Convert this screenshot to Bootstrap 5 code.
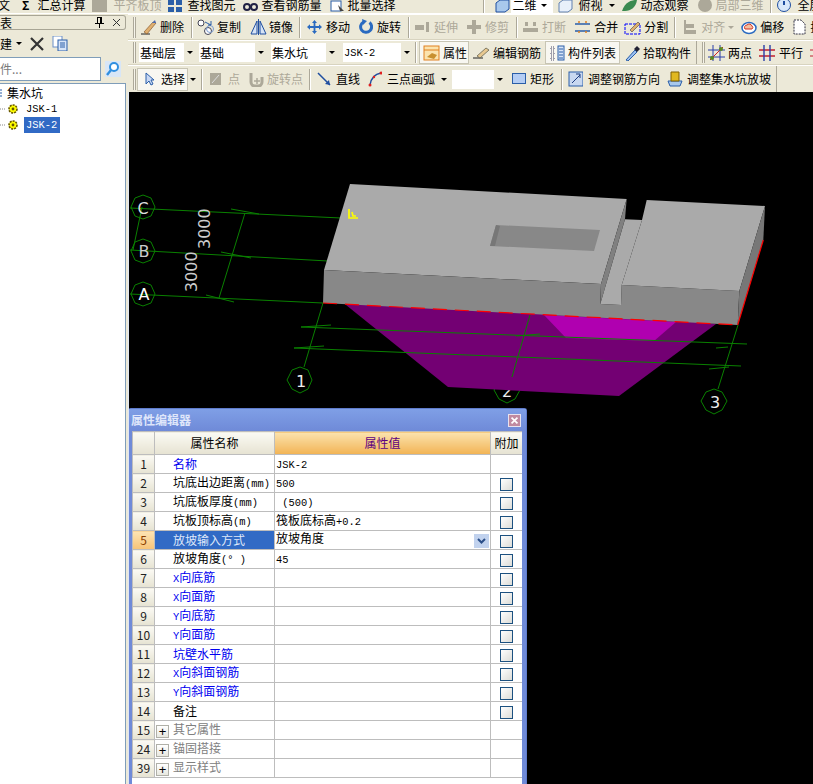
<!DOCTYPE html>
<html lang="zh"><head><meta charset="utf-8"><title>属性编辑器</title>
<link href="https://cdn.jsdelivr.net/npm/bootstrap@5.3.0/dist/css/bootstrap.min.css" rel="stylesheet">
<script src="https://cdn.jsdelivr.net/npm/bootstrap@5.3.0/dist/js/bootstrap.bundle.min.js"></script>
<style>
html,body{margin:0;background:#000;overflow:hidden}
body{font-family:"Noto Sans CJK SC","Liberation Sans",sans-serif;font-size:12px;line-height:14px;color:#000}
.app{width:813px;height:784px;background:#ece9d8;overflow:hidden}
.topstrip{height:14px;overflow:hidden;white-space:nowrap;border-bottom:1px solid #fff;flex:none}
.topin{margin-top:-3px;height:16px}
.topfirst{margin-left:-2px}
.tool{display:flex;align-items:center;gap:3px;white-space:nowrap;flex:none}
.tool svg{display:block;flex:none}
.dis{color:#aca899}
.whitebox{background:#fff;display:flex;align-items:center;width:42px;height:16px;gap:4px;padding-left:2px}
.bar{height:26px;flex:none;display:flex;align-items:center;padding-left:5px;border-bottom:1px solid #d8d4c0;border-top:1px solid #fff;white-space:nowrap;overflow:hidden}
.bar.b3{height:25px}.bar.b4{height:27px;border-bottom:none}
.grip{width:3px;height:21px;border-left:1px solid #aca899;border-right:1px solid #aca899;background:#f6f4ea;flex:none}
.sepv{width:2px;height:21px;border-left:1px solid #aca899;border-right:1px solid #fff;flex:none}
.edge{width:1px;height:100%;background:#aca899;flex:none}
.ml2{margin-left:2px}.ml3{margin-left:3px}.ml5{margin-left:5px}.ml6{margin-left:6px}.ml7{margin-left:7px}.ml8{margin-left:8px}.ml87{margin-left:87px}
.mr1{margin-right:1px}.mr2{margin-right:2px}.mr3{margin-right:3px}.mr4{margin-right:4px}.mr5{margin-right:5px}.mr6{margin-right:6px}.mr7{margin-right:7px}.mr8{margin-right:8px}.mr9{margin-right:9px}.mr10{margin-right:10px}
.g1{gap:1px}.g2{gap:2px}.g4{gap:4px}.g5{gap:5px}.g7{gap:7px}
.combo{height:19px;background:#fff;display:flex;align-items:center;justify-content:space-between;padding-left:1px;flex:none}
.cw56{width:56px}.cw67{width:67px}.cw66{width:66px}.cw69{width:69px}.cw53{width:53px}
.carr{width:11px;height:19px;background:#ece9d8;display:flex;align-items:center;justify-content:center}
.tri{width:0;height:0;border-left:3px solid transparent;border-right:3px solid transparent;border-top:3px solid #000;display:inline-block;flex:none}
.tri.grey{border-top-color:#aca899}
.press{height:23px;background:#f8f7f1;border:1px solid #c8c5b4}
.pw50{width:50px;padding-left:3px}.pw75{width:75px;padding-left:4px}.pw51{width:51px;padding-left:7px}
.lat{font-family:"Liberation Mono",monospace;font-size:10.4px}
.leftp{width:128px;flex:none;display:flex;flex-direction:column}
.lhead{height:15px;margin-top:1px;border:1px solid #a8a595;border-left:none;border-radius:0 3px 3px 0;display:flex;align-items:center;justify-content:space-between;width:126px;flex:none;overflow:hidden}
.ltools{height:27px;display:flex;align-items:center;flex:none}
.lsearch{height:24px;display:flex;align-items:center;flex:none}
.linp{width:101px;height:24px;background:#fff;border:1px solid #7f9db9;border-left:none;color:#7a7a7a;display:flex;align-items:center}
.ltree{flex:1;background:#fff;border:1px solid #7f9db9;border-left:none;border-bottom:none;margin-top:2px;width:126px}
.trow{height:16px;display:flex;align-items:center;white-space:nowrap}
.trow.first{height:17px}
.tsel{background:#316ac5;color:#fff;padding:0 3px 0 2px;height:16px;line-height:16px}
.canvasw{flex:1;position:relative;background:#000;border-left:1px solid #dfe6f4;overflow:hidden}
.scene{display:block;width:685px;height:692px}
.dlg{position:absolute;left:-1px;top:316px;width:399px;height:376px;background:#6f8ad8;border:1px solid #5f7ccc;border-bottom:none;border-radius:3px 3px 0 0;padding:0 4px 0 3px;display:flex;flex-direction:column}
.dtitle{height:22px;flex:none;display:flex;align-items:center;justify-content:space-between;color:#dfe6fa;font-weight:700;background:linear-gradient(#7f9fe6,#6f8ad8);margin:0 -4px 0 -3px;padding:0 5px 0 2px}
.dclose{width:13px;height:13px;border:1px solid #e8e2ee;background:#c08aa0;display:block}
.dbody{background:#fff;flex:1;overflow:hidden}
.ptab{table-layout:fixed;width:390px;margin:0;border-collapse:collapse;--bs-table-bg:transparent;--bs-table-color:#000;--bs-table-border-color:#bdbdbd}
.ptab th,.ptab td{padding:0;height:19px;font-weight:400;font-size:12px;line-height:14px;border:1px solid #bdbdbd;vertical-align:middle;white-space:nowrap;overflow:hidden}
.ptab thead th{height:23px;text-align:center;background:linear-gradient(#fbfaf4,#e6e3d2)}
.ptab thead th.valh{background:linear-gradient(#fbe3ae,#f2b354);color:#5c0080}
.ptab .numc{text-align:center;background:linear-gradient(#fbfaf4,#e6e3d2);color:#222}
.ptab .numa{background:linear-gradient(#fde4b4,#f7c377);color:#8a3c00}
.ptab .cn{padding-left:18px}
.ptab .cv{padding-left:1px;position:relative}
.ptab .cvedit{padding-bottom:4px}
.ptab .cx{text-align:center}
.ptab td.blu{color:#0000f0}
.ptab td.act{background:#316ac5;color:#dfe8fa}
.ptab td.grp{color:#808080;padding-left:1px}
.c1{width:22px}.c2{width:120px}.c3{width:216px}.c4{width:32px}
.pbox{width:13px;height:13px;border:1px solid #b0b0a8;background:linear-gradient(#fff,#e8e8e0);display:inline-flex;align-items:center;justify-content:center;color:#000;margin-right:4px;vertical-align:middle;font-size:13px;line-height:11px;font-family:"Liberation Sans",sans-serif}
.chk.form-check-input{width:13px;height:13px;margin:2px auto 0;border:1px solid #1c5180;border-radius:0;background:linear-gradient(135deg,#fff,#dcdcd7);display:block}
.ddb{position:absolute;right:1px;top:3px;width:15px;height:14px;background:#c1d2ee;display:flex;align-items:center;justify-content:center}
</style></head>
<body>
<div class="app d-flex flex-column">
 <div class="topstrip"><div class="topin d-flex align-items-center">
  <span class="topfirst">文</span>
  <span class="fw-bold ms-2 ps-1">Σ</span>
  <span class="ms-2">汇总计算</span>
  <span class="tool g5 dis ml6"><svg width="17" height="15"><rect x="1" y="0" width="15" height="14" fill="#aca899"/></svg><span>平齐板顶</span></span>
  <span class="tool ml6"><svg width="17" height="15"><path d="M1 2h6v5H1zM9 2h6v5H9zM1 9h6v5H1zM9 9h6v5H9z" fill="#2a5ea8"/></svg><span>查找图元</span></span>
  <span class="tool g4 ml7"><svg width="15" height="15"><circle cx="4" cy="9" r="3" fill="none" stroke="#224" stroke-width="2"/><circle cx="11" cy="9" r="3" fill="none" stroke="#224" stroke-width="2"/></svg><span>查看钢筋量</span></span>
  <span class="tool ml8"><svg width="15" height="15"><rect x="1" y="3" width="10" height="10" fill="#fff" stroke="#2a5ea8"/><path d="M8 7l6 6-4 0z" fill="#444"/></svg><span>批量选择</span></span>
  <span class="sepv ml87 mr10"></span>
  <span class="tool g1"><svg width="15" height="15"><path d="M1 5l4-3h9v9l-4 3H1z" fill="#a8c8ec" stroke="#1f4ea0"/></svg><span class="whitebox"><span>二维</span><span class="tri"></span></span></span>
  <span class="tool ml5"><svg width="15" height="15"><path d="M1 5l4-3h9v9l-4 3H1z" fill="#e8f0fa" stroke="#6080b0"/></svg><span class="ml3">俯视</span><span class="tri ml3"></span></span>
  <span class="tool ml6"><svg width="17" height="15"><path d="M1 13C4 4 10 2 16 2c-1 7-6 11-12 11z" fill="#3a8a50"/></svg><span>动态观察</span></span>
  <span class="tool dis ml8"><svg width="16" height="15"><circle cx="8" cy="7" r="7" fill="#aca899"/></svg><span>局部三维</span></span>
  <span class="sepv ml6"></span>
  <span class="tool ml5"><svg width="15" height="15"><circle cx="7" cy="7" r="6.500" fill="#d8e8fa" stroke="#1f4ea0"/><path d="M7 3v4" stroke="#1f4ea0" stroke-width="2"/></svg><span class="ml3">全屏</span></span>
 </div></div>
 <div class="d-flex flex-grow-1 overflow-hidden">
  <div class="leftp">
   <div class="lhead"><span>表</span><span class="d-flex align-items-center gap-2 pe-1">
     <svg width="9" height="11"><path d="M2 0h5v6H2zM0 6h9v1H0zM4 7h1v4H4z" fill="#000"/><rect x="3" y="1" width="2" height="5" fill="#ece9d8"/></svg>
     <svg width="9" height="9"><path d="M1 1l7 7M8 1l-7 7" stroke="#333"/></svg></span></div>
   <div class="ltools"><span>建</span><span class="tri ms-1"></span>
     <svg class="ms-2" width="14" height="14"><path d="M1 1l12 12M13 1L1 13" stroke="#333" stroke-width="2.2"/></svg>
     <svg class="ms-2" width="16" height="15"><rect x="1" y="0" width="9" height="11" fill="#fff" stroke="#6b8fc8"/><rect x="6" y="4" width="9" height="11" fill="#d7e4f8" stroke="#2a5ea8"/><path d="M8 7h5M8 9h5M8 11h5" stroke="#2a5ea8"/></svg></div>
   <div class="lsearch"><div class="linp">件...</div>
     <svg class="ms-1" width="16" height="16"><rect width="16" height="16" fill="#d8e6f6"/><circle cx="9" cy="6" r="4" fill="#fff" stroke="#2f8fe0" stroke-width="2"/><path d="M6 9l-4 5" stroke="#2f8fe0" stroke-width="2.4"/></svg></div>
   <div class="ltree">
    <div class="trow first"><svg width="4" height="12"><path d="M0 3h2M0 6h2M0 9h2" stroke="#2a5ea8"/></svg><span class="ml3">集水坑</span></div>
    <div class="trow"><svg width="24" height="14"><path d="M0 7h6" stroke="#888" stroke-dasharray="1 1"/><circle cx="13" cy="7" r="4" fill="#ff0" stroke="#665500" stroke-width="1.600" stroke-dasharray="2 1"/><circle cx="13" cy="7" r="1.400" fill="#665500"/></svg><span class="ml2 lat">JSK-1</span></div>
    <div class="trow"><svg width="24" height="14"><path d="M0 7h6" stroke="#888" stroke-dasharray="1 1"/><circle cx="13" cy="7" r="4" fill="#ff0" stroke="#665500" stroke-width="1.600" stroke-dasharray="2 1"/><circle cx="13" cy="7" r="1.400" fill="#665500"/></svg><span class="tsel lat">JSK-2</span></div>
   </div>
  </div>
  <div class="d-flex flex-column flex-grow-1 overflow-hidden">
   <div class="bar">
    <span class="grip mr4"></span>
    <span class="tool"><svg width="17" height="16"><path d="M1 15h9" stroke="#222"/><path d="M4 13L13 3l3 1-9 11z" fill="#e0b070" stroke="#7a4a20" stroke-width=".6"/><path d="M12 4l3-3 1 3z" fill="#4a6ab0"/></svg><span>删除</span></span>
    <span class="sepv ml7 mr4"></span>
    <span class="tool mr9"><svg width="17" height="16"><circle cx="4" cy="4" r="3" fill="#fff" stroke="#445"/><circle cx="11" cy="12" r="3.500" fill="#fff" stroke="#445"/><circle cx="13" cy="10" r="3.500" fill="none" stroke="#7a9ad0"/><path d="M8 3l6 3M14 2v4h-3" stroke="#2a5ea8" fill="none"/></svg><span>复制</span></span>
    <span class="tool g2"><svg width="17" height="16"><path d="M1 15L7 2v13zM16 15L10 2v13z" fill="#d8e4f6" stroke="#1f4ea0"/><path d="M8.500 0v16" stroke="#1f4ea0"/></svg><span>镜像</span></span>
    <span class="sepv ml6 mr6"></span>
    <span class="tool g4 mr9"><svg width="15" height="16"><path d="M7.500 1l2.500 3H8.400v3H12V5.200l3 2.800-3 2.800V9H8.400v3H10l-2.500 3L5 12h1.600V9H3v1.800L0 8l3-2.800V7h3.600V4H5z" fill="#2a6ac0"/></svg><span>移动</span></span>
    <span class="tool g4"><svg width="14" height="16"><path d="M10.500 3.500a5.500 5.500 0 1 1-6-.5" fill="none" stroke="#2a6ac0" stroke-width="3"/><path d="M3 0l5 2-4 4z" fill="#2a6ac0"/></svg><span>旋转</span></span>
    <span class="sepv ml7 mr4"></span>
    <span class="tool mr8 dis"><svg width="17" height="16"><path d="M1 6h9v5H1zM12 3h3v10h-3z" fill="#aca899"/></svg><span>延伸</span></span>
    <span class="tool dis"><svg width="16" height="16"><path d="M1 6h14v4H1zM6 1h4v14H6z" fill="#aca899"/></svg><span>修剪</span></span>
    <span class="sepv ml7 mr4"></span>
    <span class="tool mr8 dis"><svg width="17" height="16"><path d="M1 9h15v4H1zM3 3h3v4H3zM11 3h3v4h-3z" fill="#aca899"/></svg><span>打断</span></span>
    <span class="tool mr6"><svg width="17" height="16"><path d="M1 5h15M1 12h15" stroke="#2a5ea8" stroke-width="1.600"/><path d="M5 2v2M12 2v2M5 14v-2M12 14v-2" stroke="#e08020" stroke-width="1.500"/></svg><span>合并</span></span>
    <span class="tool"><svg width="17" height="16"><rect x="1" y="5" width="15" height="10" fill="none" stroke="#00f" stroke-dasharray="3 1"/><path d="M6 11l8-8 2 2-8 8z" fill="#e0b070" stroke="#444" stroke-width=".6"/></svg><span>分割</span></span>
    <span class="sepv ml6 mr6"></span>
    <span class="tool g4 dis"><svg width="15" height="16"><path d="M2 1h2v14H2zM4 5h8v4H4zM4 11h10v4H4z" fill="#aca899"/></svg><span>对齐</span></span><span class="tri grey ml3 mr7"></span>
    <span class="tool mr8"><svg width="16" height="16"><ellipse cx="8" cy="9" rx="7" ry="5.500" fill="#fff" stroke="#2a6ac0" stroke-width="1.500"/><path d="M4 10a2.500 2.500 0 0 1 2-4 3 3 0 0 1 5 1 2 2 0 0 1 0 3z" fill="#f4c0a0" stroke="#d03020"/></svg><span>偏移</span></span>
    <span class="tool g4"><svg width="14" height="16"><path d="M2 1h7l4 4v10H2z" fill="#fff" stroke="#334" stroke-dasharray="2 1"/></svg><span>拉</span></span>
   </div>
   <div class="bar b3">
    <span class="grip mr3"></span>
    <div class="combo cw56 mr4"><span>基础层</span><span class="carr"><i class="tri"></i></span></div>
    <div class="combo cw67 mr5"><span>基础</span><span class="carr"><i class="tri"></i></span></div>
    <div class="combo cw66 mr6"><span>集水坑</span><span class="carr"><i class="tri"></i></span></div>
    <div class="combo cw69"><span class="lat">JSK-2</span><span class="carr"><i class="tri"></i></span></div>
    <span class="sepv ml3 mr2"></span>
    <span class="tool press pw50 mr4"><svg width="17" height="16"><rect x="1" y="1" width="15" height="14" fill="#fbe3ae" stroke="#e08020"/><path d="M1 5h15" stroke="#e08020"/><path d="M4 12l5-4 5 2-3 4z" fill="#c89030"/></svg><span>属性</span></span>
    <span class="tool mr4"><svg width="17" height="16"><path d="M0 13h10" stroke="#222"/><path d="M4 11l9-8 3 2-9 8z" fill="#e8c890" stroke="#554" stroke-width=".7"/></svg><span>编辑钢筋</span></span>
    <span class="tool press pw75 mr5"><svg width="15" height="16"><path d="M1 2h3v3H1zM1 7h3v3H1zM1 12h3v3H1z" fill="none" stroke="#446" stroke-dasharray="1 1"/><rect x="8" y="1" width="6" height="14" fill="#d7e4f8" stroke="#2a5ea8"/><path d="M9 4h4M9 7h4M9 10h4M9 13h4" stroke="#2a5ea8"/></svg><span>构件列表</span></span>
    <span class="tool"><svg width="15" height="16"><path d="M1 15l9-10 2 2-9 9z" fill="#9cc0f0" stroke="#2a5ea8"/><path d="M9 4l3-3 3 3-3 3z" fill="#223"/></svg><span>拾取构件</span></span>
    <span class="edge ml5 mr5"></span>
    <span class="grip mr3"></span>
    <span class="tool mr7"><svg width="17" height="16"><path d="M5 0v16M12 0v16M0 5h17M0 12h17" stroke="#2a3ea8"/><path d="M2 15L15 2" stroke="#d02020"/><circle cx="4" cy="13" r="2" fill="#5a8a20"/><circle cx="13" cy="4" r="2" fill="#5a8a20"/></svg><span>两点</span></span>
    <span class="tool g4 mr7"><svg width="16" height="16"><path d="M0 5h16M0 11h16" stroke="#c02030" stroke-width="1.400"/><path d="M5 0v16M11 0v16" stroke="#2a3ea8" stroke-width="1.400"/></svg><span>平行</span></span>
    <span class="tool"><svg width="6" height="16"><path d="M0 5h6M0 11h6" stroke="#c02030"/></svg></span>
   </div>
   <div class="bar b4">
    <span class="grip mr1"></span>
    <span class="tool press pw51 g7"><svg width="9" height="14"><path d="M1 1v11l3-3 2 4 2-1-2-4h3z" fill="#c8d8f4" stroke="#2a5ea8"/></svg><span>选择</span></span>
    <span class="tri ml2"></span>
    <span class="sepv ml5 mr7"></span>
    <span class="tool dis g7 mr8"><svg width="11" height="12"><rect width="11" height="12" fill="#aca899"/><path d="M2 10l7-8" stroke="#ddd"/></svg><span>点</span></span>
    <span class="tool dis"><svg width="16" height="16"><path d="M3 2v9a4 4 0 0 0 4 4h3a4 4 0 0 0 4-4V6" fill="none" stroke="#aca899" stroke-width="3"/><path d="M9 7v6M6 10h6" stroke="#aca899" stroke-width="1.500"/></svg><span>旋转点</span></span>
    <span class="sepv ml6 mr6"></span>
    <span class="tool g5 mr8"><svg width="14" height="14"><path d="M1 1l12 12" stroke="#1f4ea0" stroke-width="1.500"/><path d="M13 13l-5-1 4-4z" fill="#1f4ea0"/></svg><span>直线</span></span>
    <span class="tool g5"><svg width="14" height="16"><path d="M2 14C3 7 7 3 13 2" fill="none" stroke="#1f4ea0" stroke-width="1.500"/><circle cx="2" cy="14" r="1.500" fill="#e02020"/><circle cx="13" cy="2" r="1.500" fill="#e02020"/><circle cx="6" cy="6" r="1.200" fill="#e02020"/></svg><span>三点画弧</span></span>
    <span class="tri ml6 mr5"></span>
    <div class="combo cw53 mr7"><span></span><span class="carr"><i class="tri"></i></span></div>
    <span class="tool g4"><svg width="14" height="12"><rect x=".5" y=".5" width="13" height="10" fill="#b4cdf4" stroke="#2a5ea8"/></svg><span>矩形</span></span>
    <span class="sepv ml7 mr5"></span>
    <span class="tool g5 mr7"><svg width="15" height="16"><rect x="1" y="1" width="14" height="14" fill="#c8d8f0" stroke="#2a5ea8"/><path d="M4 12l8-8M8 3h4v4" stroke="#1f3e80" fill="none"/></svg><span>调整钢筋方向</span></span>
    <span class="tool g4"><svg width="16" height="16"><path d="M1 10h14l-2 5H3z" fill="#a8c8ec" stroke="#2a5ea8"/><path d="M4 1h8v9H4z" fill="#e0b820" stroke="#806000"/></svg><span>调整集水坑放坡</span></span>
    <span class="edge ml5"></span>
   </div>
   <div class="canvasw">
    <svg class="scene" viewBox="128 92 685 692" role="img" aria-label="集水坑三维视图">
     <rect x="128" y="92" width="685" height="692" fill="#000"/>
     <g fill="none" stroke="#0a8000" stroke-width="1">
      <polygon points="142,195 150,198 154,207 150,216 142,219 134,216 130,207 134,198"/>
      <polygon points="142,239 150,242 154,251 150,260 142,263 134,260 130,251 134,242"/>
      <polygon points="142,282 150,285 154,294 150,303 142,306 134,303 130,294 134,285"/>
      <polygon points="299,367 307,370 311,380 307,389 299,393 291,389 286,380 291,370"/>
      <polygon points="506,378 514,381 519,390 514,399 506,403 498,399 493,390 498,381"/>
      <polygon points="713,389 721,392 726,401 721,410 713,414 705,410 700,401 705,392"/>
      <path d="M129 208L340 218M129 250L327 261M129 294L322 303"/>
      <path d="M141 207L132 250M244 213L218 298M322 303L303 367"/>
      <path d="M230 209l28 5M220 252l30 6M205 295l28 7"/>
     </g>
     <text x="142" y="214" text-anchor="middle" fill="#ddd" font-family="DejaVu Sans" font-size="16">C</text>
     <text x="143" y="257" text-anchor="middle" fill="#ccc" font-family="DejaVu Sans" font-size="16">B</text>
     <text x="143" y="300" text-anchor="middle" fill="#fff" font-family="DejaVu Sans" font-size="16">A</text>
     <text x="300" y="387" text-anchor="middle" fill="#eee" font-family="DejaVu Sans" font-size="16">1</text>
     <text x="506" y="397" text-anchor="middle" fill="#eee" font-family="DejaVu Sans" font-size="16">2</text>
     <text x="714" y="408" text-anchor="middle" fill="#eee" font-family="DejaVu Sans" font-size="16">3</text>
     <text transform="translate(209 249) rotate(-90)" fill="#ccc" font-family="DejaVu Sans" font-size="16">3000</text>
     <text transform="translate(196 292) rotate(-90)" fill="#ccc" font-family="DejaVu Sans" font-size="16">3000</text>
     <polygon points="345,305 447,387 618,396 715,324 545,300" fill="#730073"/>
     <polygon points="543,315 675,322 653,341 565,338" fill="#b000b0"/>
     <g fill="none" stroke="#0a8000">
      <path d="M300 327L746 344M293 348L740 366"/>
      <path d="M300 327l30-2M293 348l30-2M515 336l24-2M715 348l12-1M708 369l20-2"/>
      <path d="M529 315L511 377M737 325L717 389"/>
     </g>
     <polygon points="349,184 625.700,199 600,284 323,270" fill="#aaa"/>
     <polygon points="323,270 600,284 599.300,304 620,305 620.700,285 738.300,291 736.700,325 322,303" fill="#888"/>
     <polygon points="625.700,199 624,219 599.300,304 600,284" fill="#808080"/>
     <polygon points="624,219.300 641,220 620.700,285 620,305 599.300,304" fill="#aaa"/>
     <polygon points="645.700,200 764,206 738.300,291 620.700,285 641,220" fill="#aaa"/>
     <polygon points="764,206 762.300,240 736.700,325 738.300,291" fill="#777"/>
     <polygon points="495,225 599,230 593,251 489,246" fill="#888"/>
     <polygon points="495,225 489,246 494,246 499,226" fill="#777"/>
     <path d="M322 303L737 325" stroke="#f00" stroke-width="1.200" stroke-dasharray="14 8" fill="none"/>
     <path d="M762.300 240L736.700 325" stroke="#f00" stroke-width="1.200" fill="none"/>
     <path d="M348 209v9h9M351 212l1 4h3" stroke="#ff0" stroke-width="1.700" fill="none"/>
    </svg>
    <div class="dlg">
     <div class="dtitle"><span>属性编辑器</span><svg class="dclose" viewBox="0 0 13 13"><path d="M3 3l7 7M10 3l-7 7" stroke="#fff" stroke-width="2"/></svg></div>
     <div class="dbody">
      <table class="table ptab">
       <colgroup><col class="c1"><col class="c2"><col class="c3"><col class="c4"></colgroup>
       <thead><tr><th></th><th>属性名称</th><th class="valh">属性值</th><th>附加</th></tr></thead>
       <tbody>
        <tr><td class="numc">1</td><td class="cn blu">名称</td><td class="cv"><span class="lat">JSK-2</span></td><td class="cx"></td></tr>
        <tr><td class="numc">2</td><td class="cn">坑底出边距离<span class="lat">(mm)</span></td><td class="cv"><span class="lat">500</span></td><td class="cx"><input class="form-check-input chk" type="checkbox" aria-label="附加"></td></tr>
        <tr><td class="numc">3</td><td class="cn">坑底板厚度<span class="lat">(mm)</span></td><td class="cv"><span class="lat">&nbsp;(500)</span></td><td class="cx"><input class="form-check-input chk" type="checkbox" aria-label="附加"></td></tr>
        <tr><td class="numc">4</td><td class="cn">坑板顶标高<span class="lat">(m)</span></td><td class="cv">筏板底标高<span class="lat">+0.2</span></td><td class="cx"><input class="form-check-input chk" type="checkbox" aria-label="附加"></td></tr>
        <tr><td class="numc numa">5</td><td class="cn act">放坡输入方式</td><td class="cv cvedit">放坡角度<span class="ddb"><svg width="9" height="7"><path d="M1 1l3.500 3.500L8 1" fill="none" stroke="#2a4e88" stroke-width="2"/></svg></span></td><td class="cx"><input class="form-check-input chk" type="checkbox" aria-label="附加"></td></tr>
        <tr><td class="numc">6</td><td class="cn">放坡角度<span class="lat">(° )</span></td><td class="cv"><span class="lat">45</span></td><td class="cx"><input class="form-check-input chk" type="checkbox" aria-label="附加"></td></tr>
        <tr><td class="numc">7</td><td class="cn blu"><span class="lat">X</span>向底筋</td><td class="cv"></td><td class="cx"><input class="form-check-input chk" type="checkbox" aria-label="附加"></td></tr>
        <tr><td class="numc">8</td><td class="cn blu"><span class="lat">X</span>向面筋</td><td class="cv"></td><td class="cx"><input class="form-check-input chk" type="checkbox" aria-label="附加"></td></tr>
        <tr><td class="numc">9</td><td class="cn blu"><span class="lat">Y</span>向底筋</td><td class="cv"></td><td class="cx"><input class="form-check-input chk" type="checkbox" aria-label="附加"></td></tr>
        <tr><td class="numc">10</td><td class="cn blu"><span class="lat">Y</span>向面筋</td><td class="cv"></td><td class="cx"><input class="form-check-input chk" type="checkbox" aria-label="附加"></td></tr>
        <tr><td class="numc">11</td><td class="cn blu">坑壁水平筋</td><td class="cv"></td><td class="cx"><input class="form-check-input chk" type="checkbox" aria-label="附加"></td></tr>
        <tr><td class="numc">12</td><td class="cn blu"><span class="lat">X</span>向斜面钢筋</td><td class="cv"></td><td class="cx"><input class="form-check-input chk" type="checkbox" aria-label="附加"></td></tr>
        <tr><td class="numc">13</td><td class="cn blu"><span class="lat">Y</span>向斜面钢筋</td><td class="cv"></td><td class="cx"><input class="form-check-input chk" type="checkbox" aria-label="附加"></td></tr>
        <tr><td class="numc">14</td><td class="cn">备注</td><td class="cv"></td><td class="cx"><input class="form-check-input chk" type="checkbox" aria-label="附加"></td></tr>
        <tr><td class="numc">15</td><td class="grp"><span class="pbox">+</span>其它属性</td><td class="cv"></td><td class="cx"></td></tr>
        <tr><td class="numc">24</td><td class="grp"><span class="pbox">+</span>锚固搭接</td><td class="cv"></td><td class="cx"></td></tr>
        <tr><td class="numc">39</td><td class="grp"><span class="pbox">+</span>显示样式</td><td class="cv"></td><td class="cx"></td></tr>
       </tbody>
      </table>
     </div>
    </div>
   </div>
  </div>
 </div>
</div>
</body></html>
